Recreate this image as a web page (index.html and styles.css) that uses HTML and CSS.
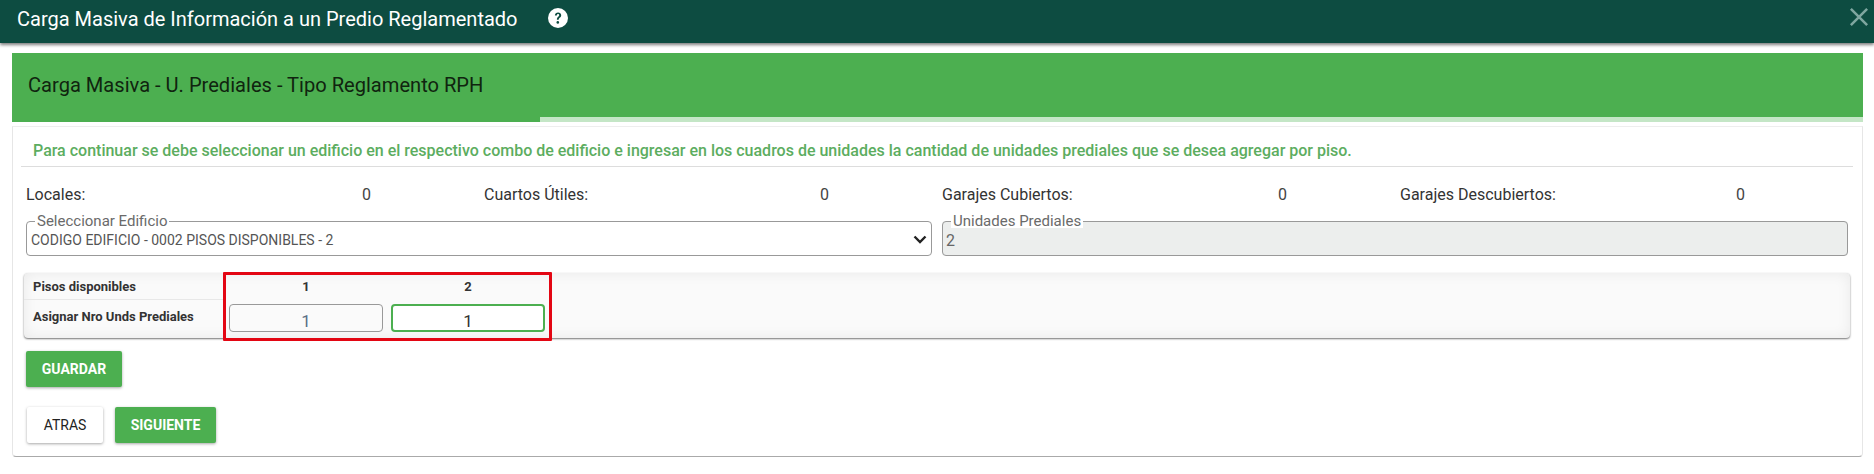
FILE: index.html
```html
<!DOCTYPE html>
<html lang="es">
<head>
  <meta charset="UTF-8" />
  <title>Carga Masiva</title>
  <link rel="stylesheet" href="styles.css">
</head>
<body>
  <header class="topbar">
    <h1>Carga Masiva de Información a un Predio Reglamentado</h1>
    <svg class="help-icon" viewBox="0 0 20 20" width="20" height="20" aria-hidden="true">
      <circle cx="10" cy="10" r="10" fill="#fff"/>
      <path d="M6.9 7.6c0-2 1.4-3.2 3.2-3.2s3.1 1.1 3.1 2.8c0 2.4-2.5 2.4-2.5 4.5H8.9c0-2.9 2.3-3 2.3-4.4 0-.7-.5-1.2-1.2-1.2s-1.2.6-1.2 1.5z" fill="#0d4c41"/>
      <circle cx="9.8" cy="14.4" r="1.3" fill="#0d4c41"/>
    </svg>
    <button class="close-btn" aria-label="Cerrar">
      <svg viewBox="0 0 16 16" width="20" height="20"><path d="M1.5 1.5l13 13M14.5 1.5l-13 13" stroke="#7fa6a0" stroke-width="2" fill="none"/></svg>
    </button>
  </header>

  <main class="page">
    <div class="step-head">
      <h2>Carga Masiva - U. Prediales - Tipo Reglamento RPH</h2>
      <div class="progress"><div class="progress-done"></div></div>
    </div>

    <section class="card">
      <p class="note">Para continuar se debe seleccionar un edificio en el respectivo combo de edificio e ingresar en los cuadros de unidades la cantidad de unidades prediales que se desea agregar por piso.</p>

      <div class="stats">
        <div class="stat"><span>Locales:</span><span class="stat-val">0</span></div>
        <div class="stat"><span>Cuartos Útiles:</span><span class="stat-val">0</span></div>
        <div class="stat"><span>Garajes Cubiertos:</span><span class="stat-val">0</span></div>
        <div class="stat"><span>Garajes Descubiertos:</span><span class="stat-val">0</span></div>
      </div>

      <div class="fields">
        <fieldset class="field">
          <legend>Seleccionar Edificio</legend>
          <span class="field-text small">CODIGO EDIFICIO - 0002 PISOS DISPONIBLES - 2</span>
          <svg class="chevron" viewBox="0 0 14 9" width="14" height="9"><path d="M1.5 1.5L7 7l5.5-5.5" stroke="#222" stroke-width="2.4" fill="none"/></svg>
        </fieldset>
        <fieldset class="field disabled">
          <legend>Unidades Prediales</legend>
          <span class="field-text">2</span>
        </fieldset>
      </div>

      <div class="floors-panel">
        <div class="floors-labels">
          <div class="label-top">Pisos disponibles</div>
          <div class="label-bottom">Asignar Nro Unds Prediales</div>
        </div>
        <div class="floors-box">
          <div class="floor">
            <div class="floor-num">1</div>
            <div class="floor-input">1</div>
          </div>
          <div class="floor">
            <div class="floor-num">2</div>
            <div class="floor-input focused">1</div>
          </div>
        </div>
      </div>

      <button class="btn btn-green btn-save">GUARDAR</button>

      <div class="actions">
        <button class="btn btn-white">ATRAS</button>
        <button class="btn btn-green">SIGUIENTE</button>
      </div>
    </section>
  </main>
</body>
</html>
```

FILE: styles.css
```css
* {
  box-sizing: border-box;
}

html, body {
  margin: 0;
  background: #fff;
  font-family: Roboto, "Liberation Sans", sans-serif;
  color: #222;
}

.topbar {
  height: 43px;
  background: #0d4c41;
  box-shadow: 0 2px 3px rgba(0,0,0,0.5);
  display: flex;
  align-items: center;
  padding-left: 17px;
  position: relative;
}

.topbar h1 {
  margin: -6px 30px 0 0;
  font-size: 20px;
  font-weight: 400;
  color: #fff;
}

.help-icon {
  margin-top: -8px;
}

.close-btn {
  margin-left: auto;
  margin-right: 5px;
  margin-top: -9px;
  padding: 0;
  border: 0;
  background: none;
  line-height: 0;
}

.page {
  padding: 10px 11px 0 12px;
}

.step-head {
  height: 69px;
  background: #4caf50;
  display: flex;
  flex-direction: column;
}

.step-head h2 {
  flex: 1;
  margin: 0;
  padding: 11px 0 0 16px;
  font-size: 20.1px;
  line-height: 42px;
  font-weight: 400;
  color: #10240f;
}

.progress {
  height: 5px;
  background: #c4e6c6;
}

.progress-done {
  width: 528px;
  height: 100%;
  background: #4caf50;
}

.card {
  margin-top: 4px;
  height: 331px;
  padding: 0 9px 0 8px;
  border: 1px solid #e6e6e6;
  border-top-color: #eee;
  border-bottom: 1px solid #aaa;
  border-radius: 0 0 4px 4px;
  background: #fff;
}

.note {
  margin: 0;
  padding: 3px 0 0 12px;
  height: 40px;
  line-height: 42px;
  font-size: 16px;
  font-weight: 500;
  color: #5cad60;
  border-bottom: 1px solid #ddd;
  white-space: nowrap;
}

.stats {
  display: grid;
  grid-template-columns: repeat(4, 458px);
  margin: 13px 0 0 5px;
  height: 29px;
  font-size: 16px;
  line-height: 29px;
  color: #333;
}

.stat {
  display: grid;
  grid-template-columns: 336px auto;
}

.stat-val {
  color: #444;
}

.fields {
  display: grid;
  grid-template-columns: 906px 906px;
  column-gap: 10px;
  margin: 11px 0 0 5px;
}

.field {
  position: relative;
  margin: 0;
  padding: 0 0 0 3px;
  height: 42px;
  margin-top: -6px;
  border: 1px solid #999;
  border-radius: 4px;
  display: flex;
  align-items: center;
}

.field legend {
  margin-left: 5px;
  padding: 0 2px;
  font-size: 15px;
  line-height: 14px;
  font-weight: 400;
  color: #6a6a6a;
  background: #fff;
}

.field.disabled {
  background: #eceeed;
}

.field-text {
  margin-top: -3px;
  font-size: 16px;
  color: #666;
}

.field-text.small {
  margin-left: 1px;
  font-size: 14px;
  color: #555;
}

.chevron {
  position: absolute;
  right: 4px;
  top: 7px;
}

.floors-panel {
  display: flex;
  width: 1826px;
  height: 65px;
  margin: 17px 0 0 3px;
  border-radius: 4px;
  background: #fafafa;
  box-shadow: inset 0 0 14px rgba(0,0,0,0.07), 0 1px 2px rgba(0,0,0,0.55);
}

.floors-labels {
  width: 199px;
  padding-left: 9px;
  font-size: 13px;
  font-weight: 700;
  color: #333;
}

.label-top {
  height: 27px;
  line-height: 28px;
  border-bottom: 1px solid #e8e8e8;
  margin-left: -9px;
  padding-left: 9px;
}

.label-bottom {
  height: 38px;
  line-height: 34px;
}

.floors-box {
  display: flex;
  gap: 8px;
  width: 329px;
  height: 69px;
  margin-top: -1px;
  padding: 0 3px;
  border: 3px solid #e30613;
  border-radius: 1px;
}

.floor {
  width: 154px;
}

.floor-num {
  height: 29px;
  line-height: 24px;
  text-align: center;
  font-size: 13px;
  font-weight: 700;
  color: #333;
}

.floor-input {
  height: 28px;
  border: 1px solid #999;
  border-radius: 4px;
  background: #fafafa;
  text-align: center;
  font-size: 17px;
  line-height: 32px;
  color: #5a7085;
}

.floor-input.focused {
  background: #fff;
  border: 2px solid #4caf50;
  line-height: 30px;
  color: #333;
}

.btn {
  display: block;
  height: 36px;
  padding: 0;
  border: 0;
  border-radius: 2px;
  font-family: inherit;
  font-size: 14px;
  box-shadow: 0 1px 3px rgba(0,0,0,0.35);
}

.btn-green {
  background: #4caf50;
  color: #fff;
  font-weight: 700;
  width: 101px;
}

.btn-white {
  background: #fff;
  color: #222;
  font-weight: 400;
  width: 76px;
}

.btn-save {
  width: 96px;
  margin: 13px 0 0 5px;
}

.actions {
  display: flex;
  gap: 12px;
  margin: 20px 0 0 6px;
}
```
